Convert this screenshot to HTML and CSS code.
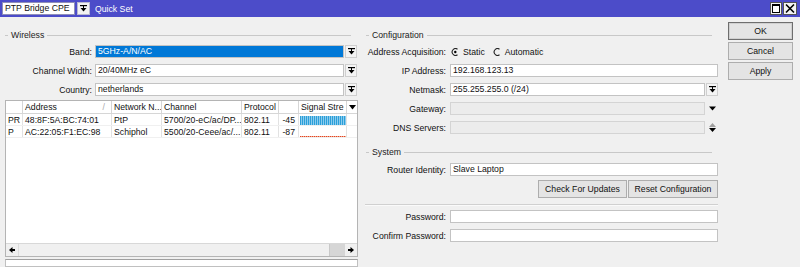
FILE: index.html
```html
<!DOCTYPE html>
<html lang="en">
<head>
    <meta charset="UTF-8">
    <title>Quick Set</title>
    <link rel="stylesheet" href="styles.css">
</head>
<body>
    <div class="titlebar">
        <div class="mode-select">PTP Bridge CPE</div>
        <div class="mode-arrow">
            <svg width="7" height="7" viewBox="0 0 7 7"><rect x="0" y="0" width="7" height="1.2" fill="#000"/><rect x="3" y="1" width="1" height="2" fill="#000"/><path d="M0.5 3 L6.5 3 L3.5 6.5 Z" fill="#000"/></svg>
        </div>
        <div class="title">Quick Set</div>
        <div class="win-buttons">
            <svg width="12" height="13" viewBox="0 0 12 13"><rect x="0.5" y="0.5" width="11" height="12" fill="#f4f4f4" stroke="#555"/><rect x="2.5" y="2.5" width="7" height="8" fill="#fff" stroke="#000"/><rect x="2" y="2" width="8" height="2" fill="#000"/></svg>
            <svg width="14" height="13" viewBox="0 0 14 13"><rect x="0.5" y="0.5" width="13" height="12" fill="#f4f4f4" stroke="#555"/><path d="M3 2.5 L11 10.5 M11 2.5 L3 10.5" stroke="#000" stroke-width="1.6"/></svg>
        </div>
    </div>

    <div class="main">
        <div class="pane left">
            <div class="group-head"><span>Wireless</span></div>

            <div class="field first">
                <label>Band:</label>
                <div class="input selected">5GHz-A/N/AC</div>
                <div class="drop-btn"><svg width="7" height="7" viewBox="0 0 7 7"><rect x="0" y="0" width="7" height="1.2" fill="#000"/><rect x="3" y="1" width="1" height="2" fill="#000"/><path d="M0.5 3 L6.5 3 L3.5 6.5 Z" fill="#000"/></svg></div>
            </div>
            <div class="field">
                <label>Channel Width:</label>
                <div class="input">20/40MHz eC</div>
                <div class="drop-btn"><svg width="7" height="7" viewBox="0 0 7 7"><rect x="0" y="0" width="7" height="1.2" fill="#000"/><rect x="3" y="1" width="1" height="2" fill="#000"/><path d="M0.5 3 L6.5 3 L3.5 6.5 Z" fill="#000"/></svg></div>
            </div>
            <div class="field">
                <label>Country:</label>
                <div class="input">netherlands</div>
                <div class="drop-btn"><svg width="7" height="7" viewBox="0 0 7 7"><rect x="0" y="0" width="7" height="1.2" fill="#000"/><rect x="3" y="1" width="1" height="2" fill="#000"/><path d="M0.5 3 L6.5 3 L3.5 6.5 Z" fill="#000"/></svg></div>
            </div>

            <div class="scan-table">
                <div class="row head">
                    <div class="cell"></div>
                    <div class="cell sortable">Address<span class="sort">/</span></div>
                    <div class="cell">Network N...</div>
                    <div class="cell">Channel</div>
                    <div class="cell">Protocol</div>
                    <div class="cell"></div>
                    <div class="cell">Signal Stre</div>
                    <div class="cell menu"><svg width="7" height="5" viewBox="0 0 7 5"><path d="M0 0 L7 0 L3.5 4.5 Z" fill="#000"/></svg></div>
                </div>
                <div class="row">
                    <div class="cell">PR</div>
                    <div class="cell">48:8F:5A:BC:74:01</div>
                    <div class="cell">PtP</div>
                    <div class="cell">5700/20-eC/ac/DP...</div>
                    <div class="cell">802.11</div>
                    <div class="cell num">-45</div>
                    <div class="cell signal"><div class="bar strong"></div></div>
                    <div class="cell"></div>
                </div>
                <div class="row">
                    <div class="cell">P</div>
                    <div class="cell">AC:22:05:F1:EC:98</div>
                    <div class="cell">Schiphol</div>
                    <div class="cell">5500/20-Ceee/ac/...</div>
                    <div class="cell">802.11</div>
                    <div class="cell num">-87</div>
                    <div class="cell signal"><div class="bar weak"></div></div>
                    <div class="cell"></div>
                </div>
                <div class="table-fill"></div>
                <div class="hscroll">
                    <div class="scroll-btn"><svg width="6" height="6" viewBox="0 0 6 6"><path d="M0 3 L3.5 0 L3.5 6 Z" fill="#000"/><rect x="3" y="2" width="3" height="2" fill="#000"/></svg></div>
                    <div class="track"><div class="thumb"></div></div>
                    <div class="scroll-btn"><svg width="6" height="6" viewBox="0 0 6 6"><path d="M6 3 L2.5 0 L2.5 6 Z" fill="#000"/><rect x="0" y="2" width="3" height="2" fill="#000"/></svg></div>
                </div>
            </div>
            <div class="status-box"></div>
        </div>

        <div class="pane right">
            <div class="group-head"><span>Configuration</span></div>

            <div class="field first">
                <label>Address Acquisition:</label>
                <div class="radios">
                    <span class="radio"><svg width="8" height="8" viewBox="0 0 8 8"><path d="M6.5 1.2 A3.4 3.4 0 1 0 6.5 6.8" fill="none" stroke="#222" stroke-width="1.1"/><circle cx="4.3" cy="4" r="1.2" fill="#000"/></svg>Static</span>
                    <span class="radio"><svg width="8" height="8" viewBox="0 0 8 8"><path d="M6.5 1.2 A3.4 3.4 0 1 0 6.5 6.8" fill="none" stroke="#222" stroke-width="1.1"/></svg>Automatic</span>
                </div>
            </div>
            <div class="field">
                <label>IP Address:</label>
                <div class="input wide">192.168.123.13</div>
            </div>
            <div class="field">
                <label>Netmask:</label>
                <div class="input">255.255.255.0 (/24)</div>
                <div class="drop-btn"><svg width="7" height="7" viewBox="0 0 7 7"><rect x="0" y="0" width="7" height="1.2" fill="#000"/><rect x="3" y="1" width="1" height="2" fill="#000"/><path d="M0.5 3 L6.5 3 L3.5 6.5 Z" fill="#000"/></svg></div>
            </div>
            <div class="field">
                <label>Gateway:</label>
                <div class="input disabled"></div>
                <div class="drop-plain"><svg width="7" height="5" viewBox="0 0 7 5"><path d="M0 0.5 L7 0.5 L3.5 4.5 Z" fill="#000"/></svg></div>
            </div>
            <div class="field">
                <label>DNS Servers:</label>
                <div class="input disabled"></div>
                <div class="drop-plain updown">
                    <svg width="7" height="4" viewBox="0 0 7 4"><path d="M0 4 L7 4 L3.5 0 Z" fill="#a0a0a0"/></svg>
                    <svg width="7" height="4" viewBox="0 0 7 4"><path d="M0 0 L7 0 L3.5 4 Z" fill="#000"/></svg>
                </div>
            </div>

            <div class="group-head system"><span>System</span></div>
            <div class="field first-sys">
                <label>Router Identity:</label>
                <div class="input wide">Slave Laptop</div>
            </div>
            <div class="button-row">
                <button class="btn check">Check For Updates</button>
                <button class="btn reset">Reset Configuration</button>
            </div>

            <div class="separator"></div>

            <div class="field pw">
                <label>Password:</label>
                <div class="input wide"></div>
            </div>
            <div class="field">
                <label>Confirm Password:</label>
                <div class="input wide"></div>
            </div>
        </div>

        <div class="actions">
            <button class="btn action default">OK</button>
            <button class="btn action">Cancel</button>
            <button class="btn action">Apply</button>
        </div>
    </div>
</body>
</html>
```

FILE: styles.css
```css
:root {
    --bg: #f0f0f0;
    --title: #4c4cc9;
    --border: #c3c3c3;
    --line: #c8c8c8;
    --grid: #e2e2e2;
    --select: #0078d7;
}

* {
    margin: 0;
    padding: 0;
    box-sizing: border-box;
}

body {
    font-family: 'Liberation Sans', Arial, sans-serif;
    font-size: 8.7px;
    background-color: var(--bg);
    color: #111;
    width: 800px;
    height: 267px;
    overflow: hidden;
}

/* title bar */
.titlebar {
    height: 17px;
    background-color: var(--title);
    display: flex;
    align-items: center;
    padding: 0 3px 0 2px;
}

.mode-select {
    width: 73px;
    height: 13px;
    background-color: #fff;
    border: 1px solid #8f8fb8;
    padding-left: 2px;
    line-height: 11px;
    white-space: nowrap;
}

.mode-arrow {
    width: 13px;
    height: 13px;
    margin-left: 2px;
    background-color: #f2f2f2;
    border: 1px solid #b8b8d0;
    display: flex;
    align-items: center;
    justify-content: center;
}

.title {
    color: #fff;
    margin-left: 5px;
}

.win-buttons {
    margin-left: auto;
    display: flex;
    gap: 1px;
}

/* layout */
.main {
    display: flex;
    height: 250px;
}

.pane {
    display: flex;
    flex-direction: column;
}

.left {
    width: 360px;
    padding-left: 5px;
    padding-right: 2px;
}

.right {
    width: 360px;
    padding-left: 6px;
    padding-right: 2px;
}

.group-head {
    display: flex;
    align-items: center;
    height: 14px;
    margin-top: 11px;
    margin-right: 7px;
    color: #222;
}

.group-head::before {
    content: '';
    width: 3px;
    border-top: 1px solid var(--line);
    margin-right: 3px;
}

.group-head::after {
    content: '';
    flex: 1;
    border-top: 1px solid var(--line);
    margin-left: 3px;
}

.right .group-head {
    margin-right: 6px;
}

.field {
    display: flex;
    align-items: center;
    height: 13px;
    margin-top: 6px;
}

.field.first {
    margin-top: 3px;
}

.field label {
    width: 87px;
    margin-right: 3px;
    text-align: right;
    white-space: nowrap;
}

.right .field label {
    width: 80px;
    margin-right: 4px;
}

.input {
    width: 249px;
    height: 13px;
    background-color: #fff;
    border: 1px solid var(--border);
    padding-left: 2px;
    line-height: 11px;
    white-space: nowrap;
    overflow: hidden;
}

.right .input {
    width: 255px;
}

.right .input.wide {
    width: 268px;
}

.input.selected {
    background-color: var(--select);
    color: #fff;
}

.input.disabled {
    background-color: #ececec;
    border-color: #d4d4d4;
}

.drop-btn {
    width: 12px;
    height: 13px;
    margin-left: 1px;
    background-color: #f4f4f4;
    border: 1px solid #cfcfcf;
    display: flex;
    align-items: center;
    justify-content: center;
}

.drop-plain {
    width: 12px;
    height: 13px;
    margin-left: 1px;
    display: flex;
    align-items: center;
    justify-content: center;
}

.drop-plain.updown {
    flex-direction: column;
    gap: 1px;
}

/* scan list */
.scan-table {
    width: 353px;
    height: 157px;
    margin-top: 4px;
    border: 1px solid #b4b4b4;
    background-color: #fff;
    display: flex;
    flex-direction: column;
}

.row {
    display: grid;
    grid-template-columns: 17px 89px 50px 80px 37px 20px 48px 10px;
    height: 12px;
    line-height: 12px;
    border-bottom: 1px solid #f0f0f0;
}

.row.head {
    height: 13px;
    line-height: 13px;
    border-bottom: 1px solid #d6d6d6;
}

.cell {
    padding-left: 2px;
    border-right: 1px solid var(--grid);
    white-space: nowrap;
    overflow: hidden;
}

.head .cell {
    border-right-color: #d6d6d6;
}

.cell:last-child {
    border-right: none;
}

.cell.sortable {
    display: flex;
    justify-content: space-between;
    padding-right: 6px;
}

.sort {
    color: #a8a8a8;
}

.cell.num {
    text-align: right;
    padding-right: 3px;
}

.cell.menu {
    display: flex;
    align-items: center;
    justify-content: center;
    padding-left: 0;
}

.cell.signal {
    padding: 0 0 0 1px;
    display: flex;
}

.bar.strong {
    width: 46px;
    height: 9px;
    margin-top: 2px;
    background: repeating-linear-gradient(90deg, #2b9fd9 0, #2b9fd9 1px, #8ccbec 1px, #8ccbec 2px);
}

.bar.weak {
    width: 46px;
    height: 1px;
    margin-top: 10px;
    background: repeating-linear-gradient(90deg, #e0402a 0, #e0402a 1px, #f5b08a 1px, #f5b08a 2px);
}

.table-fill {
    flex: 1;
}

.hscroll {
    height: 13px;
    display: flex;
    border-top: 1px solid #d8d8d8;
    background-color: var(--bg);
}

.scroll-btn {
    width: 12px;
    display: flex;
    align-items: center;
    justify-content: center;
}

.track {
    flex: 1;
    display: flex;
    justify-content: flex-end;
    border-left: 1px solid #dcdcdc;
}

.thumb {
    width: 16px;
    background-color: #d6d6d6;
    border-left: 1px solid #c8c8c8;
}

.status-box {
    width: 353px;
    flex: 1;
    margin-top: 2px;
    background-color: #fff;
    border: 1px solid #c0c0c0;
    border-top: 1px solid #a0a0a0;
}

/* configuration */
.radios {
    display: flex;
    align-items: center;
    gap: 8px;
    margin-left: 1px;
}

.radio {
    display: flex;
    align-items: center;
    gap: 4px;
}

.group-head.system {
    margin-top: 11px;
}

.field.first-sys {
    margin-top: 4px;
}

.button-row {
    display: flex;
    justify-content: flex-end;
    gap: 1px;
    margin-top: 4px;
    width: 352px;
}

.btn {
    font-family: 'Liberation Sans', Arial, sans-serif;
    font-size: 8.7px;
    color: #111;
    height: 18px;
    background-color: #e4e4e4;
    border: 1px solid #adadad;
}

.btn.check {
    width: 89px;
}

.btn.reset {
    width: 90px;
}

.separator {
    width: 353px;
    margin-top: 6px;
    margin-left: -1px;
    border-top: 1px solid #d0d0d0;
    border-bottom: 1px solid #fafafa;
}

.field.pw {
    margin-top: 4px;
}

/* dialog buttons */
.actions {
    display: flex;
    flex-direction: column;
    gap: 2px;
    padding: 5px 0 0 8px;
}

.btn.action {
    width: 65px;
}

.btn.default {
    border: 1px solid #6e6e6e;
    box-shadow: inset 0 0 0 1px #d0d0d0;
}
```
